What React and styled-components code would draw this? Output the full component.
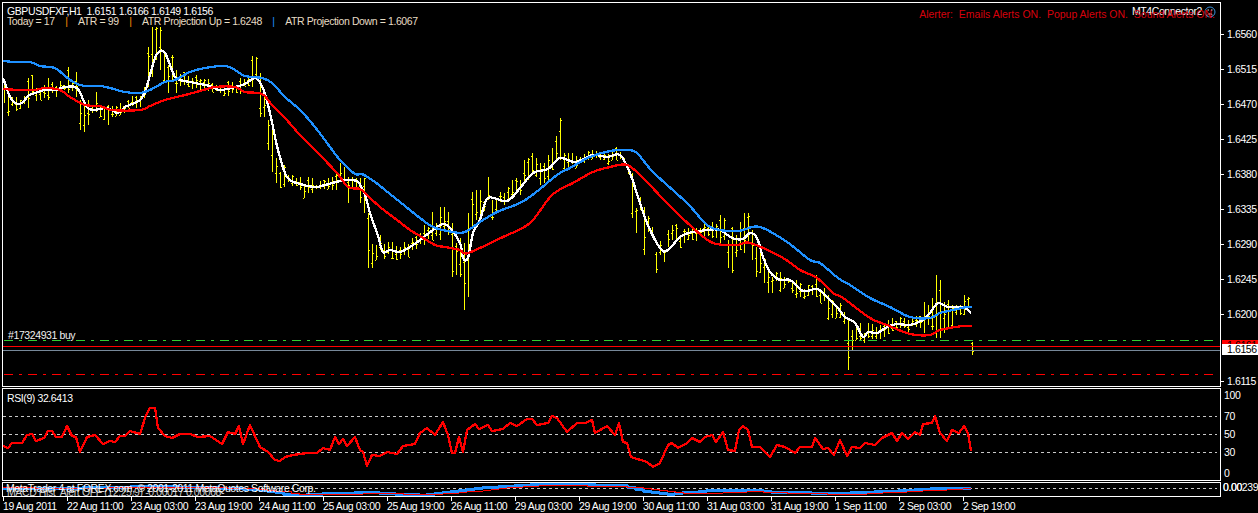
import React from "react";
import styled, { createGlobalStyle } from "styled-components";

const GlobalStyle = createGlobalStyle`
  html, body {
    margin: 0;
    height: 100%;
    background: #000;
    overflow: hidden;
  }
`;

const UI_FONT = `"Liberation Sans", Arial, sans-serif`;

const Terminal = styled.div`
  display: grid;
  grid-template-columns: 1219px 37px;
  grid-template-rows: 385px 93px 15px 16px;
  row-gap: 1px;
  width: 1258px;
  height: 513px;
  box-sizing: border-box;
  padding: 2px 0 0 2px;
  background: #000;
  color: #fff;
  font: 10.5px/14px ${UI_FONT};
  letter-spacing: -0.4px;
`;

const Pane = styled.div`
  position: relative;
  box-sizing: border-box;
  border: 1px solid #fff;
  overflow: hidden;
`;

const Plot = styled.svg`
  display: block;
  width: 100%;
  height: 100%;
  shape-rendering: crispEdges;
`;

const Trace = styled.path`
  fill: none;
  stroke: ${(p) => p.$color};
  stroke-width: ${(p) => p.$w || 2.3}px;
  stroke-linejoin: round;
`;

const Level = styled.line`
  stroke: ${(p) => p.$color};
  stroke-width: 1px;
  stroke-dasharray: ${(p) => p.$dash || "none"};
`;

const Legend = styled.div`
  position: absolute;
  top: 3px;
  left: 4px;
  white-space: pre;
  line-height: 10px;
`;

const LegendRow = styled.div`
  display: flex;
  gap: 10.5px;
  color: #e6dcc4;
`;

const Sep = styled.span`
  color: ${(p) => p.$color};
`;

const AlertLine = styled.div`
  position: absolute;
  top: 5px;
  right: 5px;
  color: #d8000c;
  font-size: 10.5px;
  letter-spacing: 0;
  line-height: 13px;
  white-space: pre;
`;

const Connector = styled.div`
  position: absolute;
  top: 2px;
  right: 4px;
  display: flex;
  align-items: center;
  gap: 2px;
  color: #fff;
  line-height: 13px;
`;

const OrderLabel = styled.div`
  position: absolute;
  left: 5px;
  top: 325px;
  color: #f0f0f0;
`;

const PaneTitle = styled.div`
  position: absolute;
  left: ${(p) => p.$left || 4}px;
  top: ${(p) => p.$top}px;
  color: ${(p) => p.$color || "#fff"};
  white-space: pre;
`;

const Axis = styled.div`
  position: relative;
  display: flex;
  flex-direction: column;
  padding-top: ${(p) => p.$pad || 0}px;
  box-sizing: border-box;
`;

const Tick = styled.div`
  display: flex;
  align-items: center;
  height: 14px;
  flex: none;
  margin-top: ${(p) => p.$mt || 0}px;
  padding-left: ${(p) => (p.$mark ? 0 : 3)}px;

  &::before {
    content: "";
    display: ${(p) => (p.$mark ? "block" : "none")};
    width: 3px;
    height: 1px;
    margin-right: 3px;
    background: #fff;
  }
`;

const PriceTag = styled.div`
  position: absolute;
  top: ${(p) => p.$top}px;
  left: 1px;
  right: 0;
  height: ${(p) => p.$h}px;
  padding-left: 5px;
  overflow: hidden;
  background: ${(p) => p.$bg};
  color: #000;
  line-height: 11px;
`;

const StackedValue = styled.div`
  position: absolute;
  top: -2px;
  left: 2px;
  white-space: nowrap;
`;

const TimeAxis = styled.div`
  display: flex;
  padding-left: 1px;
  white-space: nowrap;
`;

const Stamp = styled.div`
  position: relative;
  flex: none;
  width: 64px;
  padding-top: 1px;

  &::before {
    content: "";
    position: absolute;
    top: -1px;
    left: 0;
    width: 1px;
    height: 4px;
    background: #fff;
  }
`;

const WHITE = [[3,78],[6,86],[10,97],[15,103],[22,103],[28,96],[35,93],[45,90],[55,90],[65,87],[75,87],[80,92],[84,102],[88,108],[93,110],[100,109],[106,108],[112,110],[118,113],[125,107],[132,104],[140,100],[145,92],[150,75],[155,58],[160,51],[165,53],[170,65],[175,77],[180,80],[190,82],[200,84],[210,86],[220,90],[235,87],[245,84],[255,78],[262,86],[268,105],[272,122],[278,150],[287,177],[300,184],[315,187],[325,185],[340,181],[350,180],[358,182],[365,195],[370,213],[378,236],[383,252],[390,250],[400,252],[410,247],[420,240],[433,230],[443,224],[450,228],[460,243],[463,258],[468,258],[473,233],[480,220],[488,198],[507,201],[520,188],[533,173],[548,169],[560,158],[575,162],[593,155],[607,157],[620,155],[630,173],[638,197],[647,223],[660,248],[668,250],[683,235],[707,230],[720,230],[732,238],[743,239],[750,233],[757,238],[763,257],[770,272],[780,280],[790,280],[803,291],[817,289],[827,297],[837,307],[845,317],[855,323],[863,337],[868,332],[877,333],[887,327],[897,324],[910,325],[923,320],[930,313],[938,303],[948,307],[963,307],[971,313]];
const BLUE = [[3,61],[15,62],[30,62],[40,66],[55,68],[65,76],[75,83],[85,86],[100,86],[110,88],[125,92],[140,93],[150,90],[165,82],[175,80],[190,72],[205,68],[225,66],[235,70],[245,76],[262,78],[272,83],[285,97],[300,110],[315,127],[330,147],[340,160],[355,174],[362,174],[375,182],[385,190],[400,202],[420,218],[433,227],[453,232],[465,232],[480,222],[497,212],[520,203],[535,193],[557,175],[570,168],[590,157],[610,151],[627,150],[637,153],[653,172],[687,203],[710,227],[737,231],[752,227],[763,228],[787,242],[810,260],[820,263],[838,278],[850,285],[870,298],[890,307],[910,317],[930,318],[940,313],[953,310],[967,307],[972,307]];
const RED = [[3,89],[20,90],[35,90],[45,88],[60,90],[70,97],[85,105],[100,106],[112,110],[140,110],[150,106],[165,100],[185,95],[200,91],[215,87],[235,87],[245,92],[262,94],[272,105],[285,118],[300,135],[315,150],[337,173],[348,187],[360,189],[367,195],[380,207],[397,220],[410,230],[420,236],[435,245],[445,247],[460,250],[468,253],[503,237],[530,223],[552,195],[573,183],[593,172],[610,167],[627,165],[643,178],[667,203],[693,228],[713,243],[737,245],[750,243],[783,258],[800,270],[817,278],[833,293],[843,298],[870,318],[887,325],[910,334],[930,335],[940,330],[963,326],[972,326]];
const RSI = [[3,446],[8,448],[12,443],[22,443],[27,435],[32,434],[36,441],[44,438],[48,431],[52,431],[56,437],[62,437],[67,426],[72,436],[76,437],[80,452],[87,437],[95,435],[103,444],[110,441],[115,442],[120,436],[125,436],[130,431],[140,434],[146,415],[150,408],[155,408],[158,428],[165,436],[172,438],[180,434],[190,434],[198,437],[210,436],[222,444],[228,432],[235,434],[239,426],[243,444],[250,425],[255,436],[260,447],[268,452],[275,460],[280,461],[285,457],[293,455],[307,453],[317,453],[323,448],[330,450],[335,437],[339,444],[343,439],[347,446],[355,437],[360,450],[363,452],[367,466],[372,455],[380,456],[387,452],[397,454],[403,446],[415,444],[420,433],[427,428],[435,435],[443,422],[448,435],[452,453],[455,453],[459,437],[463,452],[467,430],[475,424],[479,429],[488,425],[492,431],[503,429],[510,423],[517,426],[527,419],[532,419],[537,425],[548,423],[552,416],[557,418],[567,432],[577,423],[585,423],[592,420],[595,433],[607,426],[615,435],[619,423],[623,442],[627,443],[631,457],[647,462],[653,467],[660,463],[668,445],[672,443],[678,448],[687,443],[692,438],[700,442],[705,437],[712,435],[716,442],[723,432],[728,450],[735,451],[739,430],[743,426],[748,430],[752,447],[760,447],[770,457],[777,445],[785,447],[795,453],[800,447],[812,447],[815,438],[823,449],[828,448],[834,455],[840,440],[847,456],[852,447],[860,448],[865,443],[875,445],[882,438],[892,433],[897,441],[902,433],[908,439],[915,432],[920,435],[923,424],[932,423],[935,416],[940,433],[947,441],[952,430],[959,433],[964,426],[968,433],[971,451]];
const MACD_BLUE = [[3,488],[60,488],[150,486],[200,487],[250,489],[273,492],[290,495],[333,493],[367,492],[420,495],[440,492],[487,487],[533,484],[570,484],[620,485],[637,490],[663,494],[687,492],[713,490],[750,490],[773,492],[840,493],[883,491],[932,488],[972,488]];
const MACD_RED = [[3,487],[60,488],[150,487],[200,487],[250,488],[280,491],[300,494],[340,494],[380,493],[420,494],[450,493],[500,488],[540,485],[620,486],[645,488],[680,493],[710,493],[750,491],[790,493],[850,494],[890,492],[932,490],[972,488]];

// high/low of the bars that stick out, read off the chart
const BAR_RANGES = {4:[80,103],8:[90,116],28:[78,108],32:[75,95],48:[78,100],68:[67,93],76:[72,97],80:[100,130],84:[103,132],88:[100,125],96:[92,112],104:[107,120],108:[105,125],148:[47,87],152:[27,77],156:[27,60],160:[27,70],164:[53,82],168:[65,93],172:[55,80],176:[70,93],252:[56,87],256:[57,80],260:[73,117],264:[97,117],268:[120,150],272:[127,172],276:[158,183],280:[172,188],284:[165,187],304:[185,198],336:[173,190],340:[163,180],344:[167,182],348:[177,203],360:[178,203],364:[178,213],368:[213,268],372:[244,268],376:[245,260],424:[225,245],432:[212,240],440:[207,240],444:[207,232],448:[212,235],452:[223,277],456:[243,275],460:[238,277],464:[243,310],468:[213,297],472:[192,227],476:[190,220],480:[190,220],488:[177,200],492:[200,220],496:[200,212],508:[187,200],512:[180,195],516:[178,190],520:[180,195],524:[160,183],528:[158,180],532:[153,175],536:[158,177],540:[163,185],544:[163,183],548:[155,180],552:[148,170],556:[136,160],560:[118,160],564:[153,170],632:[173,218],636:[208,233],644:[207,255],656:[252,273],664:[250,262],668:[230,247],672:[225,240],676:[224,240],680:[235,248],720:[215,245],724:[218,240],728:[240,268],732:[227,273],736:[235,257],740:[222,250],744:[213,253],748:[213,243],752:[230,260],756:[247,277],760:[253,273],764:[258,283],768:[270,293],772:[277,293],780:[272,292],792:[280,293],796:[280,298],800:[283,297],816:[275,297],820:[290,303],828:[295,320],832:[300,318],836:[305,318],840:[303,318],848:[320,370],852:[330,350],856:[328,340],924:[302,333],928:[305,325],932:[298,330],936:[275,338],940:[280,338],944:[302,333],948:[300,327],952:[305,327],956:[305,315],960:[305,315],964:[295,315],968:[297,308],972:[342,355]};

const TIMES = ["19 Aug 2011","22 Aug 11:00","23 Aug 03:00","23 Aug 19:00","24 Aug 11:00","25 Aug 03:00","25 Aug 19:00","26 Aug 11:00","29 Aug 03:00","29 Aug 19:00","30 Aug 11:00","31 Aug 03:00","31 Aug 19:00","1 Sep 11:00","2 Sep 03:00","2 Sep 19:00"];
const PRICES = ["1.6560","1.6515","1.6470","1.6425","1.6380","1.6335","1.6290","1.6245","1.6200"];

function lineThrough(pts) {
  return "M" + pts.map((p) => p.join(" ")).join("L");
}

// catmull-rom through the read-off points, so the averages don't look like straight segments
function smooth(pts) {
  let d = `M${pts[0][0]} ${pts[0][1]}`;
  for (let i = 0; i < pts.length - 1; i++) {
    const a = pts[Math.max(i - 1, 0)];
    const b = pts[i];
    const c = pts[i + 1];
    const e = pts[Math.min(i + 2, pts.length - 1)];
    d += `C${b[0] + (c[0] - a[0]) / 6} ${b[1] + (c[1] - a[1]) / 6} ${c[0] - (e[0] - b[0]) / 6} ${c[1] - (e[1] - b[1]) / 6} ${c[0]} ${c[1]}`;
  }
  return d;
}

function valueAt(pts, x) {
  for (let i = 0; i < pts.length - 1; i++) {
    if (x >= pts[i][0] && x <= pts[i + 1][0]) {
      const t = (x - pts[i][0]) / (pts[i + 1][0] - pts[i][0]);
      return pts[i][1] + t * (pts[i + 1][1] - pts[i][1]);
    }
  }
  return pts[pts.length - 1][1];
}

function steps(pts, every) {
  let d = "";
  for (let x = 3; x <= 972; x += every) {
    const y = Math.round(valueAt(pts, x));
    d += d ? `H${x}V${y}` : `M${x} ${y}`;
  }
  return d;
}

function barsPath() {
  let seed = 17;
  const rnd = () => {
    seed = (seed * 16807) % 2147483647;
    return seed / 2147483647;
  };
  let d = "";
  for (let x = 4; x <= 972; x += 4) {
    const mid = valueAt(WHITE, x);
    const [hi, lo] = BAR_RANGES[x] || [
      Math.round(mid - 2 - rnd() * 7),
      Math.round(mid + 2 + rnd() * 7),
    ];
    const open = Math.round(hi + rnd() * (lo - hi));
    const close = Math.round(hi + rnd() * (lo - hi));
    d += `M${x + 0.5} ${hi}V${lo}M${x - 1} ${open + 0.5}H${x}M${x + 1} ${close + 0.5}H${x + 2}`;
  }
  return d;
}

const BARS = barsPath();

function Smiley() {
  return (
    <svg width="12" height="12" viewBox="0 0 12 12">
      <circle cx="6" cy="6" r="5" fill="none" stroke="#3a8fd8" strokeWidth="1" />
      <path d="M3.5 4h1.5M7 4h1.5" stroke="#d8d8d8" strokeWidth="1" />
      <path d="M3.5 9C4.5 7.5 7.5 7.5 8.5 9" fill="none" stroke="#d8d8d8" strokeWidth="1" />
    </svg>
  );
}

export default function App() {
  return (
    <>
      <GlobalStyle />
      <Terminal>
        <Pane>
          <Plot viewBox="3 3 1217 383">
            <Trace d={BARS} $color="#ffff00" $w={1} />
            <Trace d={smooth(WHITE)} $color="#fff" />
            <Trace d={smooth(RED)} $color="#ff0000" />
            <Trace d={smooth(BLUE)} $color="#1e90ff" />
            <Level x1="4" x2="1213" y1="340.5" y2="340.5" $color="#32cd32" $dash="9 6 3 6" />
            <Level x1="3" x2="1220" y1="346.5" y2="346.5" $color="#ff0000" />
            <Level x1="3" x2="1220" y1="350.5" y2="350.5" $color="#778899" />
            <Level x1="4" x2="1213" y1="374.5" y2="374.5" $color="#ff0000" $dash="9 6 3 6" />
          </Plot>
          <Legend>
            <div>GBPUSDFXF,H1  1.6151 1.6166 1.6149 1.6156</div>
            <LegendRow>
              <span>Today = 17</span>
              <Sep $color="#ff8c00">|</Sep>
              <span>ATR = 99</span>
              <Sep $color="#ff8c00">|</Sep>
              <span>ATR Projection Up = 1.6248</span>
              <Sep $color="#1e90ff">|</Sep>
              <span>ATR Projection Down = 1.6067</span>
            </LegendRow>
          </Legend>
          <Connector>
            MT4Connector2
            <Smiley />
          </Connector>
          <AlertLine>Alerter:  Emails Alerts ON.  Popup Alerts ON.  Sound Alerts ON.</AlertLine>
          <OrderLabel>#17324931 buy</OrderLabel>
        </Pane>
        <Axis $pad={25}>
          {PRICES.map((price, i) => (
            <Tick key={price} $mark $mt={i ? 21 : 0}>{price}</Tick>
          ))}
          <Tick $mark $mt={53}>1.6115</Tick>
          <PriceTag $top={338} $h={4} $bg="#ff0000">1.6161</PriceTag>
          <PriceTag $top={342} $h={11} $bg="#fff">1.6156</PriceTag>
        </Axis>

        <Pane>
          <Plot viewBox="3 389 1217 91">
            <Level x1="3" x2="1217" y1="416.5" y2="416.5" $color="#c8c8c8" $dash="3 3" />
            <Level x1="3" x2="1217" y1="434.5" y2="434.5" $color="#c8c8c8" $dash="3 3" />
            <Level x1="3" x2="1217" y1="452.5" y2="452.5" $color="#c8c8c8" $dash="3 3" />
            <Trace d={lineThrough(RSI)} $color="#ff0000" />
          </Plot>
          <PaneTitle $top={2}>RSI(9) 32.6413</PaneTitle>
        </Pane>
        <Axis>
          <Tick $mt={0}>100</Tick>
          <Tick $mt={6.5}>70</Tick>
          <Tick $mt={4}>50</Tick>
          <Tick $mt={4}>30</Tick>
          <Tick $mt={7.5}>0</Tick>
        </Axis>

        <Pane>
          <Plot viewBox="3 483 1217 13">
            <Level x1="3" x2="1217" y1="488.5" y2="488.5" $color="#c8c8c8" $dash="3 3" />
            <Trace d={steps(MACD_BLUE, 8)} $color="#1e90ff" $w={3} />
            <Trace d={steps(MACD_RED, 8)} $color="#ff0000" $w={1} />
          </Plot>
          <PaneTitle $top={2} $left={4} $color="#c8c8c8">MACD Hist  Alert OFF (12,25,9) -0.00017 0.00008</PaneTitle>
          <PaneTitle $top={-2} $left={3}>MetaTrader 4 at FOREX.com, © 2001-2011 MetaQuotes Software Corp.</PaneTitle>
        </Pane>
        <Axis>
          <StackedValue>0.00239</StackedValue>
          <StackedValue>0.00</StackedValue>
        </Axis>

        <TimeAxis>
          {TIMES.map((time) => (
            <Stamp key={time}>{time}</Stamp>
          ))}
        </TimeAxis>
      </Terminal>
    </>
  );
}
